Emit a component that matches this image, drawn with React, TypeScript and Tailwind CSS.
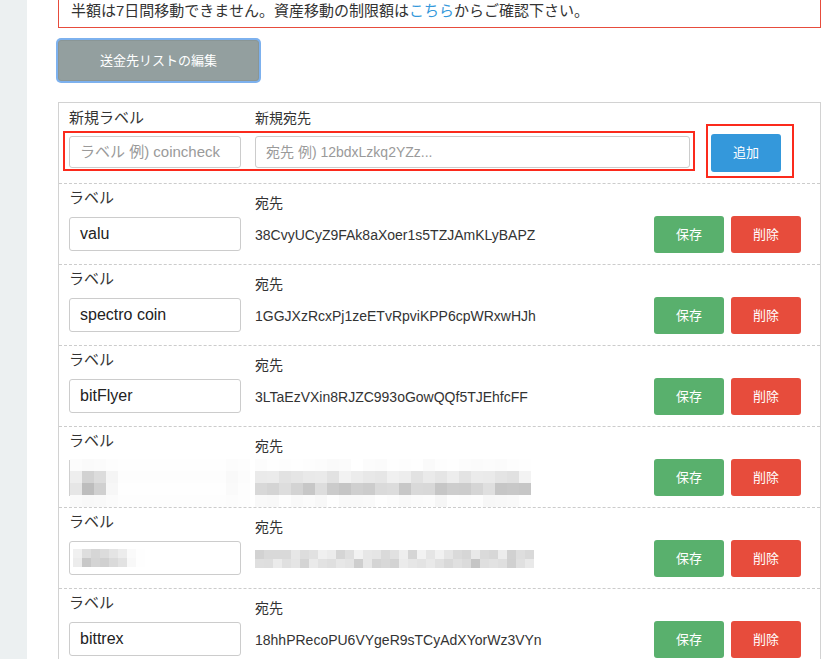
import React from "react";

type Entry = { label: string; address: string; masked?: "a" | "b" };

const entries: Entry[] = [
  { label: "valu", address: "38CvyUCyZ9FAk8aXoer1s5TZJAmKLyBAPZ" },
  { label: "spectro coin", address: "1GGJXzRcxPj1zeETvRpviKPP6cpWRxwHJh" },
  { label: "bitFlyer", address: "3LTaEzVXin8RJZC993oGowQQf5TJEhfcFF" },
  { label: "", address: "", masked: "a" },
  { label: "", address: "", masked: "b" },
  { label: "bittrex", address: "18hhPRecoPU6VYgeR9sTCyAdXYorWz3VYn" },
];

// deterministic grays for the blurred (mosaic) cells
function grays(seed: number, count: number, base: number, spread: number): number[] {
  let s = seed;
  const out: number[] = [];
  for (let i = 0; i < count; i++) {
    s = (s * 9301 + 49297) % 233280;
    out.push(Math.round(base + (s / 233280) * spread));
  }
  return out;
}

function Mosaic({ rows, cell }: { rows: number[][]; cell: number }) {
  return (
    <div className="flex flex-col">
      {rows.map((row, r) => (
        <div key={r} className="flex">
          {row.map((g, c) => (
            <div
              key={c}
              style={{ width: cell, height: cell, background: `rgb(${g},${g},${g})` }}
            />
          ))}
        </div>
      ))}
    </div>
  );
}

function MaskedLabel({ variant }: { variant: "a" | "b" }) {
  if (variant === "a") {
    const rows = [
      [252, 250, 251, 253, 254, 254, 254, 254, 254, 254, 254, 254, 254, 252, 253],
      [238, 210, 220, 245, 253, 253, 253, 253, 253, 253, 253, 253, 253, 249, 252],
      [230, 189, 208, 247, 254, 254, 254, 254, 254, 254, 254, 254, 254, 250, 253],
      [250, 248, 249, 251, 253, 253, 253, 253, 253, 253, 253, 253, 253, 252, 253],
    ];
    return (
      <div className="relative mt-[9px] h-[36px] w-[172px] border-l border-[#cfcfcf]">
        <div className="absolute left-0 top-[-1px] overflow-hidden">
          <Mosaic rows={rows} cell={12} />
        </div>
      </div>
    );
  }
  const rows = [
    [240, 222, 214, 220, 228, 236, 250, 254],
    [236, 200, 212, 208, 218, 226, 248, 254],
  ];
  return (
    <div className="mt-[9px] flex h-[34px] w-[172px] items-center rounded-[3px] border border-[#cccccc] bg-white pl-[3px]">
      <Mosaic rows={rows} cell={9} />
    </div>
  );
}

function MaskedAddress({ variant }: { variant: "a" | "b" }) {
  if (variant === "a") {
    const top = grays(7, 23, 224, 20);
    const mid = grays(13, 23, 196, 28);
    const low = grays(3, 23, 246, 8);
    return (
      <div className="mt-[3px]">
        <Mosaic rows={[grays(5, 23, 250, 5), top, mid, low]} cell={12} />
      </div>
    );
  }
  const a = grays(21, 31, 208, 34);
  const b = grays(37, 31, 196, 40);
  return (
    <div className="mt-[13px]">
      <Mosaic rows={[a, b]} cell={9} />
    </div>
  );
}

function EntryRow({ entry, last }: { entry: Entry; last: boolean }) {
  return (
    <div
      className={
        "flex h-[81px] pl-[10px] pr-[19px] " +
        (last ? "" : "border-b border-dashed border-[#cccccc]")
      }
    >
      <div className="w-[172px] pt-[4px]">
        <div className="text-[15px] leading-[20px] text-[#333]">ラベル</div>
        {entry.masked ? (
          <MaskedLabel variant={entry.masked} />
        ) : (
          <div className="mt-[9px] flex h-[34px] items-center rounded-[3px] border border-[#cccccc] bg-white pl-[10px] text-[16px] text-[#222]">
            {entry.label}
          </div>
        )}
      </div>
      <div className="ml-[14px] flex-1 pt-[9px]">
        <div className="text-[14px] leading-[20px] text-[#333]">宛先</div>
        {entry.masked ? (
          <MaskedAddress variant={entry.masked} />
        ) : (
          <div className="mt-[12px] text-[14px] leading-[20px] text-[#333]">{entry.address}</div>
        )}
      </div>
      <div className="flex gap-[7px] pt-[32px]">
        <button className="h-[37px] w-[70px] rounded-[3px] bg-[#59b06d] text-[13px] text-white">
          保存
        </button>
        <button className="h-[37px] w-[70px] rounded-[3px] bg-[#e74c3c] text-[13px] text-white">
          削除
        </button>
      </div>
    </div>
  );
}

export default function App() {
  return (
    <div className="flex min-h-screen bg-white font-['Liberation_Sans','Noto_Sans_CJK_JP',sans-serif]">
      <div className="w-[27px] shrink-0 bg-[#ecf0f1]" />
      <div className="flex-1 pl-[31px] pr-[19px]">
        {/* notice box, scrolled partly out of view */}
        <div className="mt-[-29px] overflow-hidden border border-[#e74c3c] px-[12px] pb-[6px] pt-[9px] text-[15px] leading-[20px] text-[#333]">
          <div className="whitespace-nowrap">
            セキュリティ上の理由により、日本円の入金・暗号資産の購入をされた場合、入金額・購入額の
          </div>
          <div className="whitespace-nowrap">
            半額は7日間移動できません。資産移動の制限額は
            <span className="text-[#3498db]">こちら</span>
            からご確認下さい。
          </div>
        </div>

        <button className="mt-[12px] h-[41px] w-[201px] rounded-[3px] border border-[#8a9696] bg-[#939f9f] text-[13px] text-white shadow-[0_0_0_2px_#7db1ee]">
          送金先リストの編集
        </button>

        <div className="mt-[21px] border border-[#d2d2d2]">
          {/* new entry row */}
          <div className="relative flex h-[81px] border-b border-dashed border-[#cccccc] pl-[10px] pt-[5px]">
            <div className="w-[172px]">
              <div className="text-[15px] leading-[20px] text-[#333]">新規ラベル</div>
              <div className="mt-[8px] flex h-[32px] items-center rounded-[3px] border border-[#cccccc] pl-[10px] text-[15px] text-[#9a9a9a]">
                ラベル 例) coincheck
              </div>
            </div>
            <div className="ml-[14px] w-[435px]">
              <div className="text-[14px] leading-[20px] text-[#333]">新規宛先</div>
              <div className="mt-[8px] flex h-[32px] items-center rounded-[3px] border border-[#cccccc] pl-[10px] text-[14px] text-[#9a9a9a]">
                宛先 例) 12bdxLzkq2YZz...
              </div>
            </div>
            <div className="ml-[21px] pt-[26px]">
              <button className="h-[38px] w-[70px] rounded-[3px] bg-[#3498db] text-[13px] text-white">
                追加
              </button>
            </div>
            {/* annotation highlights */}
            <div className="pointer-events-none absolute left-[4px] top-[28px] h-[40px] w-[632px] border-2 border-[#fb2a1c]" />
            <div className="pointer-events-none absolute left-[647px] top-[21px] h-[54px] w-[88px] border-2 border-[#fb2a1c]" />
          </div>

          {entries.map((e, i) => (
            <EntryRow key={i} entry={e} last={i === entries.length - 1} />
          ))}
        </div>
      </div>
    </div>
  );
}
